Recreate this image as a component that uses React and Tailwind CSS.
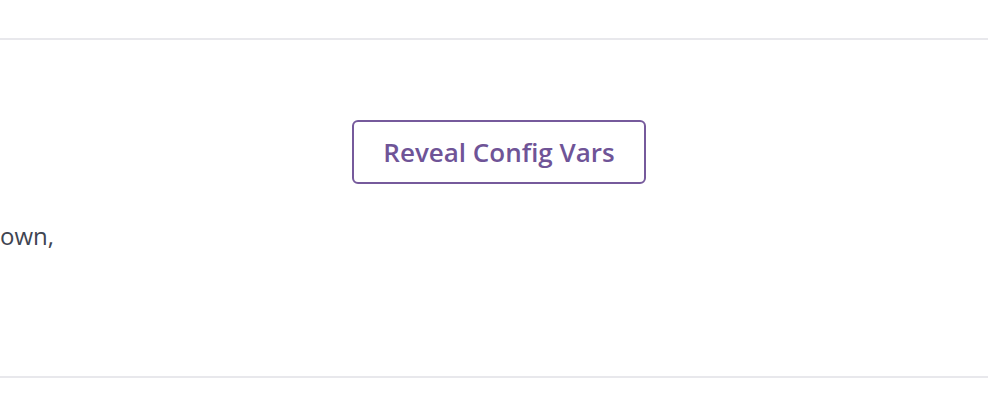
export default function App() {
  return (
    <div className="w-[988px] h-[420px] bg-white overflow-hidden" style={{ fontFamily: "'Open Sans', Lato, sans-serif" }}>
      <div className="h-[38px]" />
      <div className="h-[340px] border-y-2 border-[#e8e8ec] flex flex-col">
        <div className="flex justify-center pt-[80px] pl-[10px]">
          <button className="w-[294px] h-[64px] border-2 border-[#765a9c] rounded-[6px] text-[#6f5497] text-[26px] font-semibold flex items-center justify-center">
            Reveal Config Vars
          </button>
        </div>
        <div className="mt-[37px] text-[24px] leading-[30px] text-[#3f4552]">own,</div>
      </div>
    </div>
  );
}
